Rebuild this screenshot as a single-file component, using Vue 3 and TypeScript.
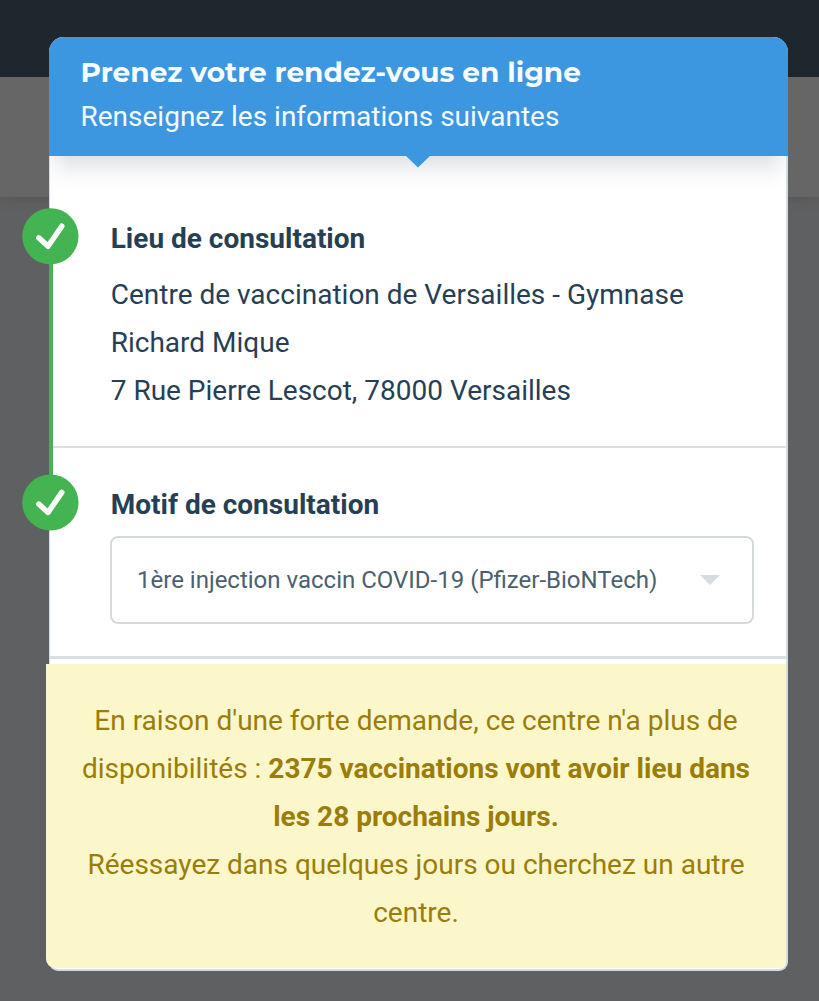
<script setup lang="ts">
const place: string[] = [
  'Centre de vaccination de Versailles - Gymnase',
  'Richard Mique',
  '7 Rue Pierre Lescot, 78000 Versailles',
]
</script>

<template>
  <div class="page">
    <div class="topbar"></div>
    <div class="subbar"></div>
    <main class="card">
      <header class="head">
        <h1>Prenez votre rendez-vous en ligne</h1>
        <p>Renseignez les informations suivantes</p>
        <svg class="notch" width="26" height="13" viewBox="0 0 26 13"><path d="M0 0H26L13 12.5Z" fill="#3c96e0" /></svg>
      </header>
      <section class="step place">
        <span class="rail"></span>
        <svg class="badge" width="57" height="57" viewBox="0 0 57 57">
          <circle cx="28.4" cy="28.3" r="28.1" fill="#43b451" />
          <path d="M16.8 29.8L26 38.3L39.8 18.2" fill="none" stroke="#fff" stroke-width="5.4" stroke-linecap="round" stroke-linejoin="round" />
        </svg>
        <h2>Lieu de consultation</h2>
        <address>
          <span v-for="line in place" :key="line">{{ line }}</span>
        </address>
      </section>
      <section class="step reason">
        <svg class="badge" width="57" height="57" viewBox="0 0 57 57">
          <circle cx="28.4" cy="28.5" r="28.1" fill="#43b451" />
          <path d="M16.8 30L26 38.5L39.8 18.4" fill="none" stroke="#fff" stroke-width="5.4" stroke-linecap="round" stroke-linejoin="round" />
        </svg>
        <h2>Motif de consultation</h2>
        <div class="select">
          <span>1ère injection vaccin COVID-19 (Pfizer-BioNTech)</span>
          <svg width="20" height="10" viewBox="0 0 20 10"><path d="M0 0H20L10 10Z" fill="#d7dce2" /></svg>
        </div>
      </section>
      <div class="notice">
        <p>En raison d'une forte demande, ce centre n'a plus de<br />disponibilités : <b>2375 vaccinations vont avoir lieu dans</b><br /><b>les 28 prochains jours.</b><br />Réessayez dans quelques jours ou cherchez un autre<br />centre.</p>
      </div>
    </main>
  </div>
</template>

<style>
body {
  margin: 0;
}
</style>

<style scoped>
.page {
  position: relative;
  box-sizing: border-box;
  width: 819px;
  height: 1001px;
  padding: 37px 31px 0 49px;
  overflow: hidden;
  background: #5f6062;
  font-family: Roboto, "Liberation Sans", sans-serif;
  font-size: 28px;
  color: #273f54;
}
.topbar,
.subbar {
  position: absolute;
  left: 0;
  right: 0;
}
.topbar {
  z-index: 1;
  top: 0;
  height: 77px;
  background: #1e262e;
}
.subbar {
  top: 77px;
  height: 120px;
  background: #666;
  box-shadow: 0 2px 14px rgba(0, 0, 0, 0.1);
}
.card {
  position: relative;
  z-index: 2;
  box-sizing: border-box;
  width: 739px;
  height: 934px;
  border: solid #d5dae0;
  border-width: 0 2px 2px 1px;
  border-radius: 15px 15px 9px 9px;
  background: #fff;
}
.head {
  position: relative;
  z-index: 1;
  box-sizing: border-box;
  height: 119px;
  margin: 0 -2px 0 -1px;
  padding: 15px 31.5px 0;
  border-radius: 15px 15px 0 0;
  background: #3c96e0;
  color: #f6fcff;
}
.head::after {
  content: "";
  position: absolute;
  left: 1px;
  right: 2px;
  top: 119px;
  height: 34px;
  background: linear-gradient(#e0e4e8, #eceff1 30%, #fafbfb 68%, #fff);
  mask-image: linear-gradient(90deg, rgba(0, 0, 0, 0.35), #000 20px, #000 calc(100% - 20px), rgba(0, 0, 0, 0.35));
}
h1,
h2,
p {
  margin: 0;
}
h1 {
  font-family: Montserrat, Inter, sans-serif;
  font-size: 28px;
  line-height: 40px;
  font-weight: 700;
  white-space: nowrap;
}
.head p {
  margin-top: 5px;
  line-height: 40px;
  white-space: nowrap;
}
.notch {
  position: absolute;
  z-index: 1;
  left: 356px;
  top: 118px;
}
.step {
  position: relative;
  box-sizing: border-box;
  padding-left: 61px;
}
.place {
  height: 292px;
  padding-top: 63px;
  border-bottom: 2px solid #dbdee2;
}
.rail {
  position: absolute;
  left: -1px;
  top: 100px;
  width: 4px;
  height: 226px;
  background: #43b451;
  z-index: 1;
}
.badge {
  position: absolute;
  z-index: 2;
  left: -28px;
  top: 52px;
}
h2 {
  margin-left: -0.3px;
  font-size: 28px;
  line-height: 40px;
  font-weight: 700;
  white-space: nowrap;
}
address {
  display: flex;
  flex-direction: column;
  margin: 12px 0 0 -0.3px;
  font-style: normal;
  line-height: 48px;
  white-space: nowrap;
}
.reason {
  height: 211px;
  padding-top: 37px;
  border-bottom: 3px solid #dbdee3;
}
.reason .badge {
  top: 26px;
}
.select {
  display: flex;
  align-items: center;
  justify-content: space-between;
  box-sizing: border-box;
  width: 644px;
  height: 88px;
  margin: 11px 0 0 -1px;
  padding: 0 32px 0 25px;
  border: 2px solid #d6dadd;
  border-radius: 8px;
  color: #4b6071;
  font-size: 24px;
  white-space: nowrap;
}
.notice {
  box-sizing: border-box;
  width: 740px;
  height: 304px;
  margin: 5px 0 0 -4px;
  padding-top: 33px;
  border-radius: 0 0 7px 9px;
  background: #fcf7ca;
  color: #9a7d0a;
  line-height: 48px;
  text-align: center;
  white-space: nowrap;
}
</style>
